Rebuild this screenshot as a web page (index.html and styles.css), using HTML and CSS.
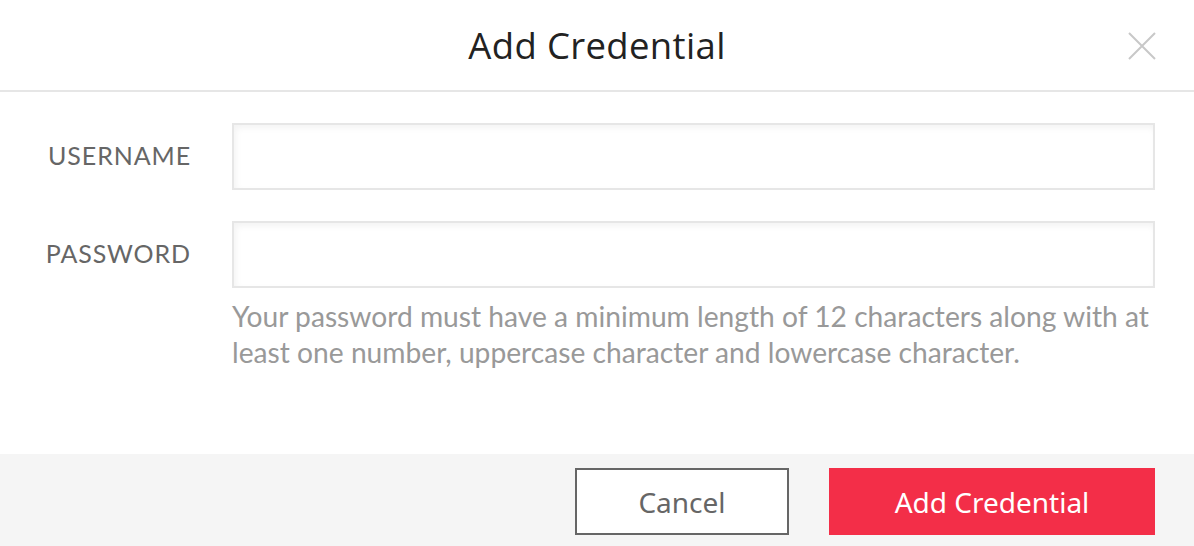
FILE: index.html
```html
<!DOCTYPE html>
<html>
<head>
<meta charset="utf-8">
<link rel="stylesheet" href="styles.css">
</head>
<body>
<div class="modal">
  <header class="modal-header">
    <h1 class="modal-title">Add Credential</h1>
    <button class="close-btn" aria-label="Close">
      <svg width="28" height="28" viewBox="0 0 28 28"><path d="M1 1 L27 27 M27 1 L1 27" stroke="#c8c8c8" stroke-width="2" fill="none"/></svg>
    </button>
  </header>
  <main class="modal-body">
    <div class="field">
      <label class="field-label">USERNAME</label>
      <div class="field-control"><input class="text-input" type="text"></div>
    </div>
    <div class="field">
      <label class="field-label">PASSWORD</label>
      <div class="field-control">
        <input class="text-input" type="password">
        <p class="help">Your password must have a minimum length of 12 characters along with at least one number, uppercase character and lowercase character.</p>
      </div>
    </div>
  </main>
  <footer class="modal-footer">
    <button class="btn btn-cancel">Cancel</button>
    <button class="btn btn-primary">Add Credential</button>
  </footer>
</div>
</body>
</html>
```
FILE: styles.css
```css
html, body { margin: 0; padding: 0; background: #fff; }
.modal { width: 1194px; height: 546px; display: flex; flex-direction: column; }
.modal-header {
  height: 90px; border-bottom: 2px solid #e6e6e6;
  display: flex; align-items: center; justify-content: center; position: relative;
}
.modal-title {
  margin: 0; font-family: "Open Sans", sans-serif; font-weight: 400;
  font-size: 36.5px; color: #222; letter-spacing: 0.35px;
}
.close-btn {
  position: absolute; right: 38px; top: 32px; width: 28px; height: 28px;
  padding: 0; border: 0; background: none;
}
.close-btn svg { display: block; }
.modal-body { flex: 1; padding: 31px 39px 0 0; display: flex; flex-direction: column; gap: 31px; }
.field { display: flex; gap: 42px; align-items: flex-start; }
.field-label {
  width: 191px; text-align: right; flex: none; line-height: 64px;
  font-family: Lato, sans-serif; font-size: 25px; letter-spacing: 0.9px; color: #666;
  margin-right: -1px;
}
.field-control { flex: 1; }
.text-input {
  display: block; box-sizing: border-box; width: 100%; height: 67px; margin: 0;
  border: 2px solid #e6e6e6; background: #fff; box-shadow: inset 2px 3px 6px rgba(0,0,0,0.05);
  outline: none;
}
.help {
  margin: 10px -4px 0 0; font-family: Lato, sans-serif; font-size: 28.2px; line-height: 36px; color: #999;
}
.modal-footer {
  height: 92px; background: #f5f5f5; box-sizing: border-box;
  padding: 14px 39px 0 0; display: flex; justify-content: flex-end; align-items: flex-start; gap: 40px;
}
.btn {
  height: 67px; margin: 0; font-family: "Noto Sans", sans-serif; font-size: 28px;
  box-sizing: border-box; cursor: pointer;
}
.btn-cancel { width: 214px; background: #fff; border: 2px solid #666; color: #666; }
.btn-primary { width: 326px; background: #f32e48; border: 0; color: #fff; }
```
